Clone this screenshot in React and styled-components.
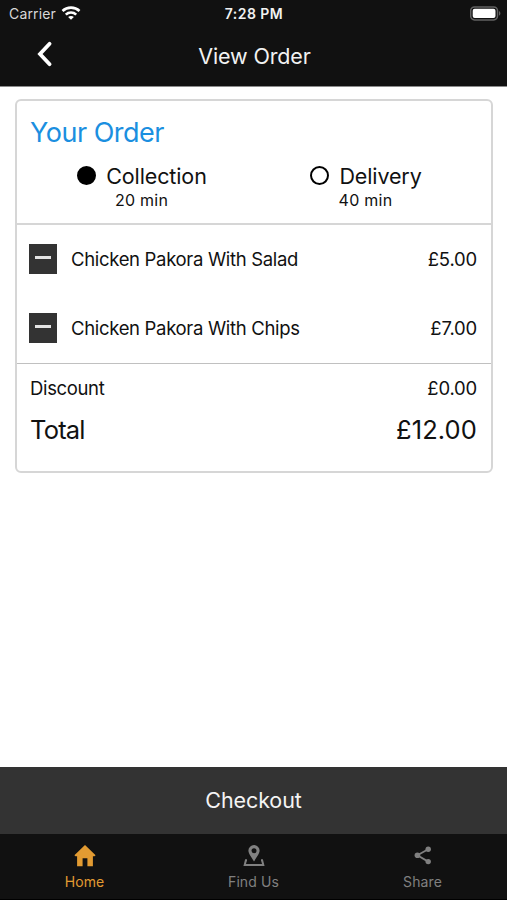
import { useState } from "react";
import styled, { createGlobalStyle } from "styled-components";

const GlobalStyle = createGlobalStyle`
  * { box-sizing: border-box; }
  body {
    margin: 0;
    background: #fff;
    font-family: Inter, "Liberation Sans", sans-serif;
  }
  button {
    font-family: inherit;
    border: none;
    padding: 0;
    margin: 0;
    background: none;
    cursor: pointer;
  }
`;

const items = [
  { name: "Chicken Pakora With Salad", price: "£5.00" },
  { name: "Chicken Pakora With Chips", price: "£7.00" },
];

const WifiIcon = () => (
  <svg width="20" height="15" viewBox="0 0 20 15" fill="none" stroke="#fff" strokeWidth="2.6">
    <path d="M1.5 5C6.2 0.5 13.8 0.5 18.5 5" />
    <path d="M4.8 8.6C7.7 5.8 12.3 5.8 15.2 8.6" />
    <path d="M10 13.8L7.1 11C8.7 9.5 11.3 9.5 12.9 11Z" fill="#fff" stroke="none" />
  </svg>
);

const BatteryIcon = () => (
  <svg width="31" height="16" viewBox="0 0 31 16">
    <rect x="0.7" y="0.9" width="26.8" height="13" rx="3.8" fill="#111" stroke="#626262" strokeWidth="1.5" />
    <rect x="2.7" y="2.7" width="22.8" height="9.4" rx="2" fill="#fff" />
    <path d="M29 5C30.9 5.9 30.9 8.9 29 9.8Z" fill="#626262" />
  </svg>
);

const BackIcon = () => (
  <svg width="18" height="28" viewBox="0 0 18 28" fill="none" stroke="#fff" strokeWidth="3.8" strokeLinecap="round" strokeLinejoin="miter">
    <path d="M14.6 3.8L5 14L14.6 24.2" />
  </svg>
);

const HomeIcon = () => (
  <svg width="22" height="22" viewBox="0 0 22 22" fill="currentColor">
    <path d="M11 0L21.6 10.2L20.5 11.3H18.9V21.2H13.4V13.2H8.6V21.2H3.1V11.3H1.5L0.4 10.2Z" />
  </svg>
);

const PinIcon = () => (
  <svg width="22" height="22" viewBox="0 0 22 22">
    <path
      fill="currentColor"
      fillRule="evenodd"
      d="M11 0A5.6 5.6 0 0 0 5.4 5.6C5.4 8.2 7.6 11.4 11 16.4C14.4 11.4 16.6 8.2 16.6 5.6A5.6 5.6 0 0 0 11 0ZM11 3.2A2.5 2.5 0 1 1 11 8.2A2.5 2.5 0 0 1 11 3.2Z"
    />
    <path d="M4 15.2H2.9L1.7 20H20.3L19.1 15.2H18" fill="none" stroke="currentColor" strokeWidth="2" />
  </svg>
);

const ShareIcon = () => (
  <svg width="22" height="22" viewBox="0 0 22 22" fill="currentColor">
    <path d="M16.2 4.2L5.4 10.3L16.2 16.6" fill="none" stroke="currentColor" strokeWidth="1.8" />
    <circle cx="16.2" cy="4.2" r="2.7" />
    <circle cx="5.4" cy="10.3" r="2.8" />
    <circle cx="16.2" cy="16.6" r="2.7" />
  </svg>
);

const tabs = [
  { name: "Home", icon: HomeIcon },
  { name: "Find Us", icon: PinIcon },
  { name: "Share", icon: ShareIcon },
];

const App = () => {
  const [method, setMethod] = useState("collection");
  const [activeTab, setActiveTab] = useState("Home");

  return (
    <Screen>
      <GlobalStyle />
      <Header>
        <StatusBar>
          <Carrier>
            <span>Carrier</span>
            <WifiIcon />
          </Carrier>
          <Clock>7:28 PM</Clock>
          <Battery>
            <BatteryIcon />
          </Battery>
        </StatusBar>
        <NavBar>
          <BackButton aria-label="Back">
            <BackIcon />
          </BackButton>
          <PageTitle>View Order</PageTitle>
        </NavBar>
      </Header>

      <Content>
        <Card>
          <OrderTop>
            <OrderTitle>Your Order</OrderTitle>
            <Methods>
              <Method onClick={() => setMethod("collection")}>
                <MethodLabel>
                  <Radio $checked={method === "collection"} />
                  <MethodName>Collection</MethodName>
                </MethodLabel>
                <MethodTime>20 min</MethodTime>
              </Method>
              <Method onClick={() => setMethod("delivery")}>
                <MethodLabel>
                  <Radio $checked={method === "delivery"} />
                  <MethodName>Delivery</MethodName>
                </MethodLabel>
                <MethodTime>40 min</MethodTime>
              </Method>
            </Methods>
          </OrderTop>

          <ItemList>
            {items.map((item) => (
              <ItemRow key={item.name}>
                <RemoveButton aria-label="Remove">
                  <Minus />
                </RemoveButton>
                <ItemName>{item.name}</ItemName>
                <Price>{item.price}</Price>
              </ItemRow>
            ))}
          </ItemList>

          <Summary>
            <DiscountRow>
              <DiscountLabel>Discount</DiscountLabel>
              <Price>£0.00</Price>
            </DiscountRow>
            <TotalRow>
              <TotalLabel>Total</TotalLabel>
              <TotalPrice>£12.00</TotalPrice>
            </TotalRow>
          </Summary>
        </Card>
      </Content>

      <Checkout>Checkout</Checkout>

      <TabBar>
        {tabs.map(({ name, icon: Icon }) => (
          <Tab key={name} $active={activeTab === name} onClick={() => setActiveTab(name)}>
            <Icon />
            <TabName>{name}</TabName>
          </Tab>
        ))}
      </TabBar>
    </Screen>
  );
};

export default App;

const Screen = styled.div`
  width: 507px;
  height: 900px;
  display: flex;
  flex-direction: column;
  background: #fff;
  overflow: hidden;
`;

const Header = styled.header`
  height: 87px;
  background: #111;
  border-bottom: 1px solid #8b8b8b;
  color: #f2f2f2;
`;

const StatusBar = styled.div`
  height: 27px;
  display: grid;
  grid-template-columns: 1fr auto 1fr;
  align-items: center;
  padding: 0 6px 0 9px;
  font-size: 14px;
  line-height: 27px;
`;

const Carrier = styled.div`
  display: flex;
  align-items: center;
  gap: 5px;
  color: #d8d8d8;
  letter-spacing: 0.15px;
`;

const Clock = styled.div`
  font-weight: 600;
  letter-spacing: 0.45px;
  margin-right: 2px;
`;

const Battery = styled.div`
  display: flex;
  justify-content: flex-end;
`;

const NavBar = styled.div`
  height: 59px;
  display: grid;
  grid-template-columns: 90px 1fr 90px;
  align-items: center;
  padding-bottom: 2px;
`;

const BackButton = styled.button`
  height: 32px;
  padding: 0 0 4px 35px;
  display: flex;
`;

const PageTitle = styled.h1`
  margin: 0;
  padding-left: 2px;
  text-align: center;
  font-size: 21.5px;
  line-height: 28px;
  font-weight: 400;
  letter-spacing: -0.15px;
`;

const Content = styled.main`
  flex: 1;
  padding: 12px 14px 0 15px;
`;

const Card = styled.section`
  height: 374px;
  border: 2px solid #d6d6d6;
  border-radius: 6px;
  color: #111;
`;

const OrderTop = styled.div`
  height: 124px;
  padding: 15px 13px 0;
  border-bottom: 2px solid #d6d6d6;
`;

const OrderTitle = styled.h2`
  margin: 0;
  font-size: 27px;
  line-height: 34px;
  font-weight: 400;
  letter-spacing: -0.5px;
  color: #1b8fe0;
`;

const Methods = styled.div`
  display: grid;
  grid-template-columns: 1fr 1fr;
  padding-top: 13px;
`;

const Method = styled.button`
  display: flex;
  flex-direction: column;
  align-items: center;
  color: #111;
`;

const MethodLabel = styled.span`
  display: flex;
  align-items: center;
  gap: 10px;
  height: 26px;
`;

const Radio = styled.span`
  width: 19px;
  height: 19px;
  margin-top: -2px;
  border: 2px solid #000;
  border-radius: 50%;
  background: ${(props) => (props.$checked ? "#000" : "transparent")};
`;

const MethodName = styled.span`
  font-size: 21.5px;
  line-height: 26px;
  letter-spacing: -0.12px;
`;

const MethodTime = styled.span`
  margin-top: 1px;
  padding-right: 1px;
  font-size: 16px;
  line-height: 20px;
  letter-spacing: 0.25px;
`;

const ItemList = styled.div`
  height: 139px;
  border-bottom: 1px solid #c0c0c0;
`;

const ItemRow = styled.div`
  height: 69px;
  display: flex;
  align-items: center;
  padding: 0 14px 2px 12px;
  font-size: 18.5px;
`;

const RemoveButton = styled.button`
  width: 28px;
  height: 30px;
  display: flex;
  justify-content: center;
  background: #333;
`;

const Minus = styled.span`
  width: 16px;
  height: 3px;
  margin-top: 12px;
  background: #e4e4e4;
`;

const ItemName = styled.span`
  flex: 1;
  padding-left: 14px;
  letter-spacing: -0.32px;
`;

const Price = styled.span`
  letter-spacing: -0.2px;
`;

const Summary = styled.div`
  padding: 11px 14px 0 13px;
`;

const DiscountRow = styled.div`
  display: flex;
  justify-content: space-between;
  font-size: 18.5px;
  line-height: 26px;
`;

const DiscountLabel = styled.span`
  letter-spacing: -0.35px;
`;

const TotalRow = styled.div`
  display: flex;
  justify-content: space-between;
  align-items: center;
  height: 34px;
  margin-top: 11px;
  font-size: 25.5px;
`;

const TotalLabel = styled.span`
  letter-spacing: -0.8px;
`;

const TotalPrice = styled.span`
  letter-spacing: 0.1px;
`;

const Checkout = styled.button`
  height: 67px;
  padding-bottom: 1px;
  background: #333;
  color: #f4f4f4;
  font-size: 21.5px;
  letter-spacing: -0.1px;
`;

const TabBar = styled.nav`
  height: 66px;
  display: grid;
  grid-template-columns: repeat(3, 1fr);
  background: #111;
  border-bottom: 1px solid #000;
`;

const Tab = styled.button`
  display: flex;
  flex-direction: column;
  align-items: center;
  padding-top: 11px;
  color: ${(props) => (props.$active ? "#e29b32" : "#808080")};
`;

const TabName = styled.span`
  margin-top: 5px;
  font-size: 14px;
  line-height: 20px;
  letter-spacing: 0.1px;
`;
